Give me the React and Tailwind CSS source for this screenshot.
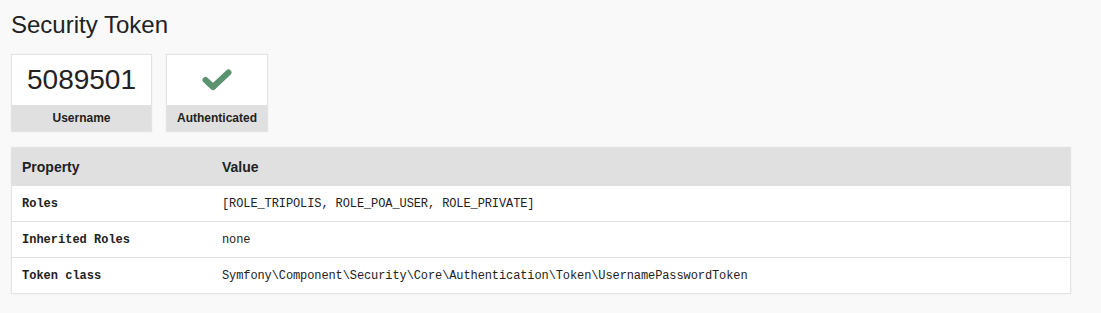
const rows = [
  { key: "Roles", value: "[ROLE_TRIPOLIS, ROLE_POA_USER, ROLE_PRIVATE]" },
  { key: "Inherited Roles", value: "none" },
  {
    key: "Token class",
    value: "Symfony\\Component\\Security\\Core\\Authentication\\Token\\UsernamePasswordToken",
  },
];

const Metric = ({ label, width, children }) => (
  <div className={`flex flex-col border border-[#e3e3e3] shadow-[0_0_1px_rgba(128,128,128,0.2)] ${width}`}>
    <div className="h-[50px] bg-white flex items-center justify-center">{children}</div>
    <div className="h-[26px] bg-[#e0e0e0] flex items-center justify-center text-[12px] font-bold text-[#222]">
      {label}
    </div>
  </div>
);

const App = () => {
  return (
    <div className="min-h-[313px] bg-[#f9f9f9] px-[11px] pt-[9px] pb-[18px] text-[#222] font-['Liberation_Sans',Arial,sans-serif]">
      <h2 className="text-[24px] leading-[32px] font-normal mb-[13px]">Security Token</h2>

      <div className="flex gap-[14px] mb-[15px]">
        <Metric label="Username" width="w-[141px]">
          <span className="text-[28px] leading-none">5089501</span>
        </Metric>
        <Metric label="Authenticated" width="w-[102px]">
          <svg width="30" height="22" viewBox="0 0 30 22">
            <path
              d="M3.5 11 L11 18 L26.5 3.5"
              fill="none"
              stroke="#5b9370"
              strokeWidth="6"
              strokeLinecap="round"
              strokeLinejoin="round"
            />
          </svg>
        </Metric>
      </div>

      <div className="w-[1060px] border border-[#e3e3e3] bg-white shadow-[0_0_1px_rgba(128,128,128,0.2)]">
        <div className="flex h-[38px] items-center bg-[#e0e0e0] text-[14px] font-bold">
          <div className="w-[200px] pl-[10px]">Property</div>
          <div className="pl-[10px]">Value</div>
        </div>
        {rows.map((r, i) => (
          <div
            key={r.key}
            className={`flex items-center text-[12px] font-['Liberation_Mono',monospace] ${i > 0 ? "h-[36px] border-t border-[#e0e0e0]" : "h-[35px]"}`}
          >
            <div className="w-[200px] pl-[10px] font-bold">{r.key}</div>
            <div className="pl-[10px] tracking-[-0.1px]">{r.value}</div>
          </div>
        ))}
      </div>
    </div>
  );
};

export default App;
